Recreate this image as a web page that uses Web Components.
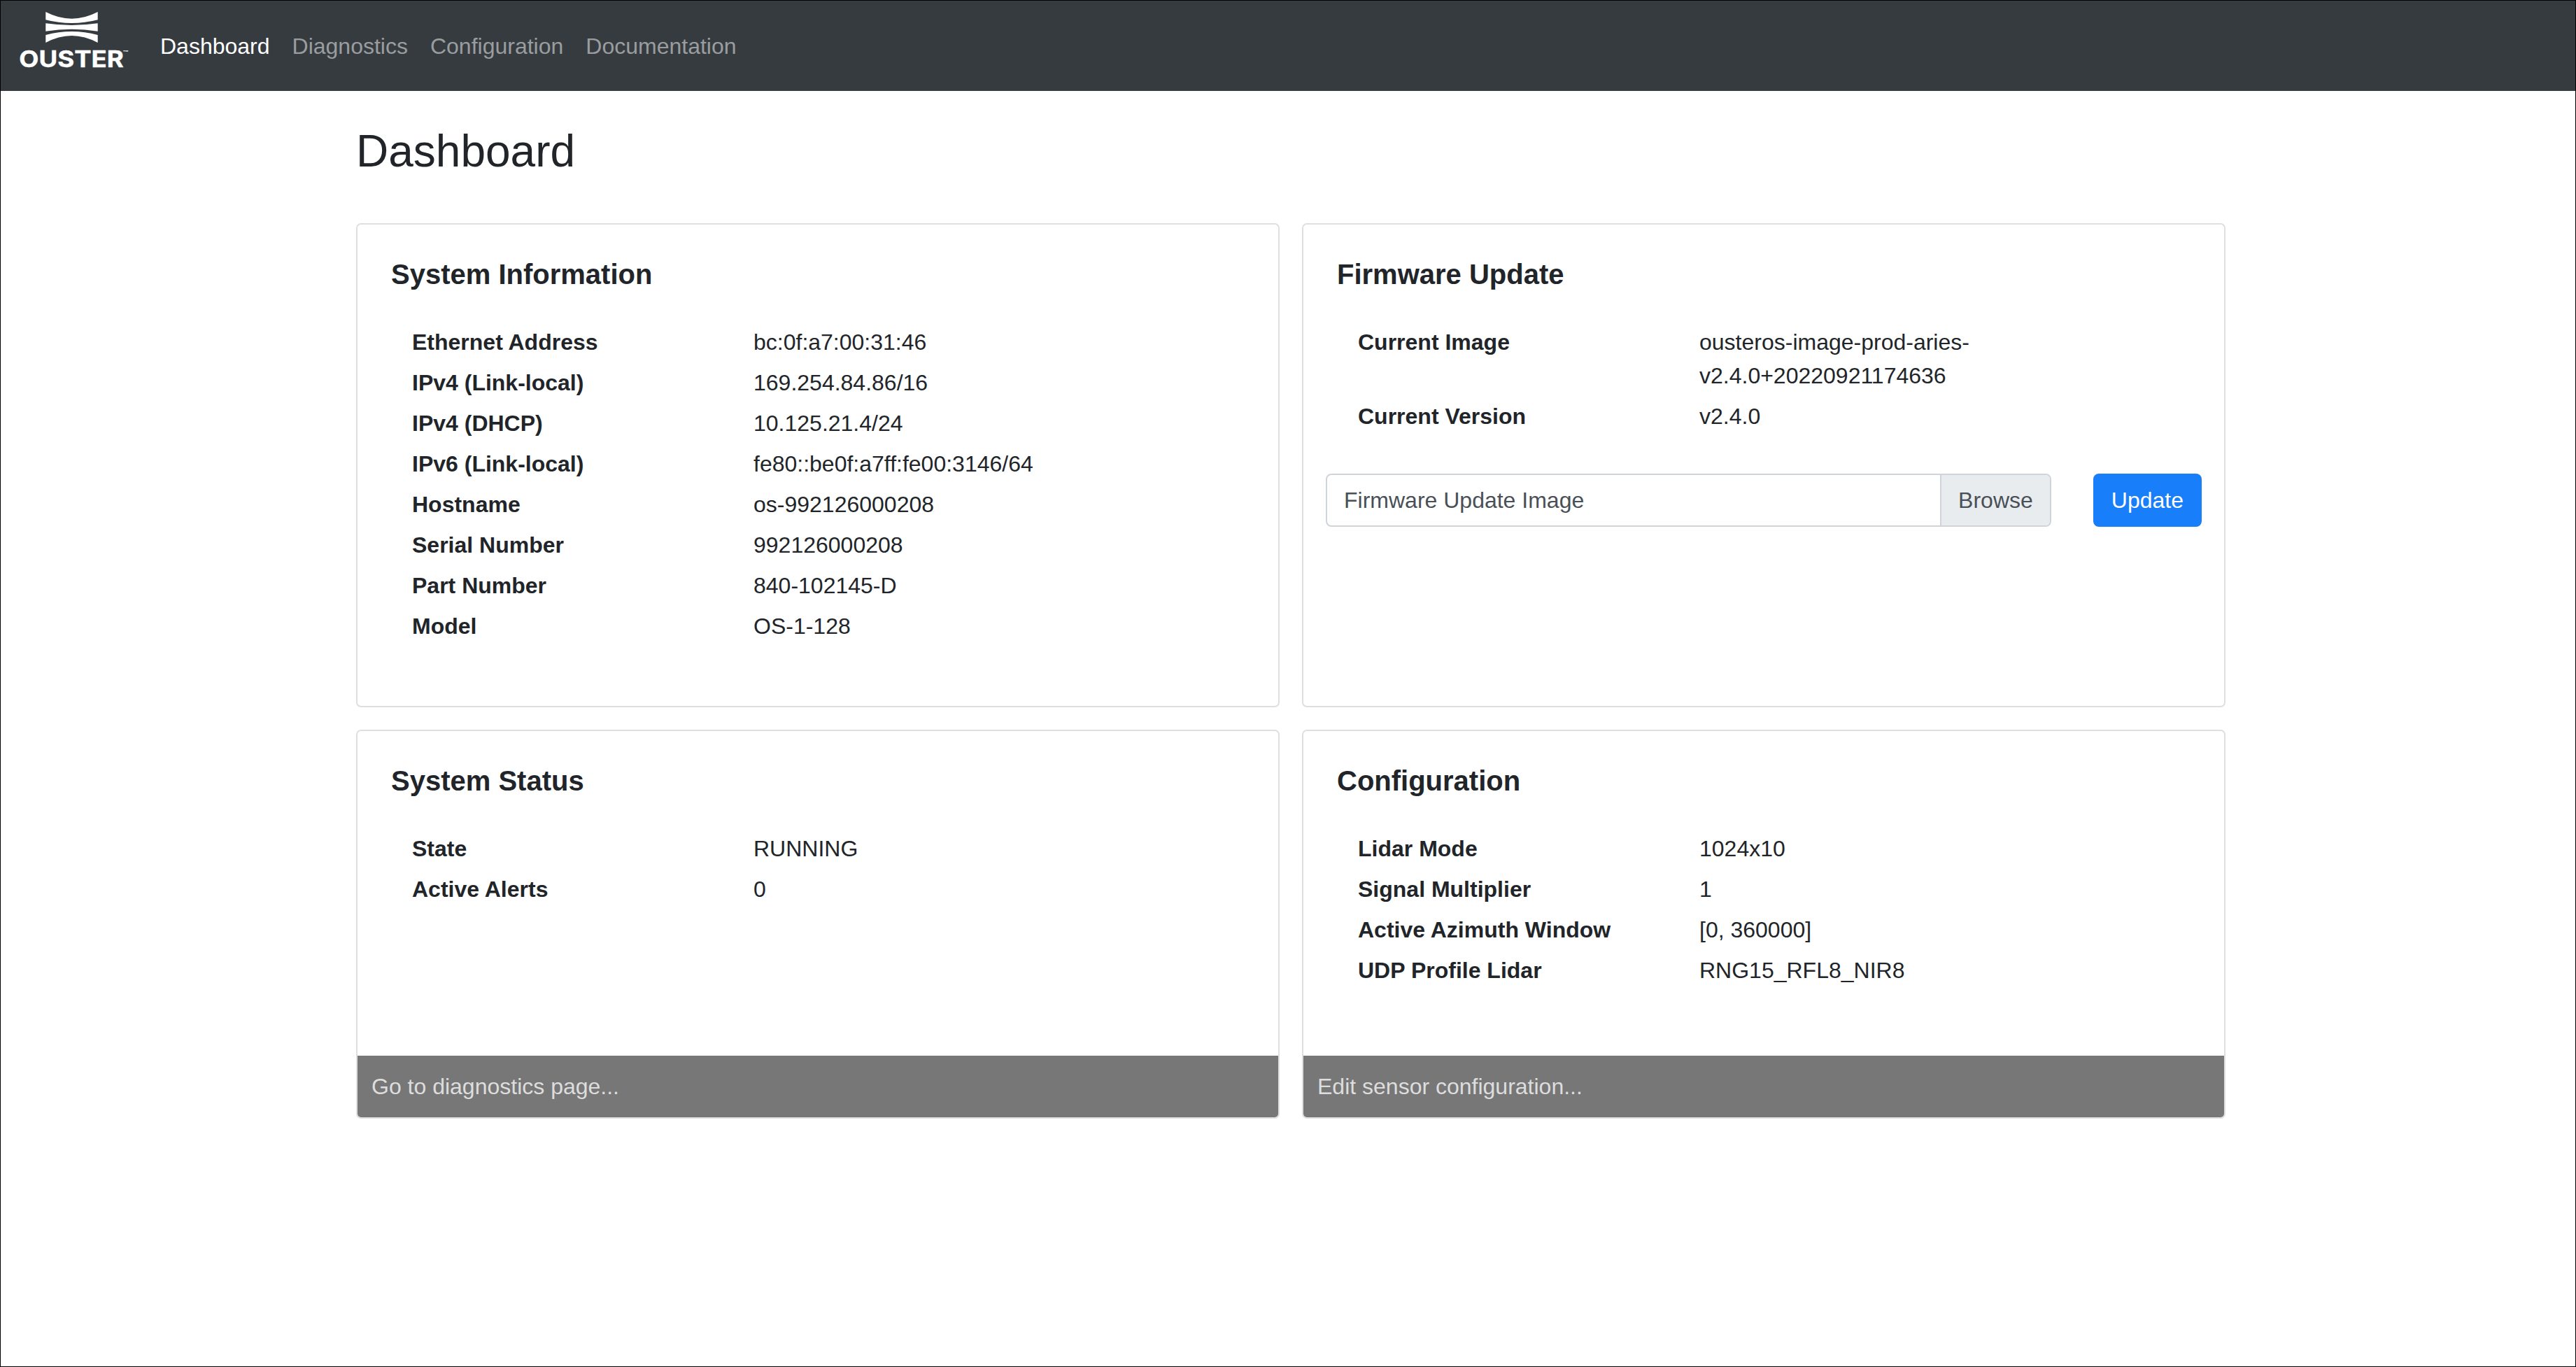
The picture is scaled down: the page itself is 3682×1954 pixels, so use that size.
<!DOCTYPE html>
<html lang="en">
<head>
<meta charset="utf-8">
<title>Ouster Dashboard</title>
<style>
  body {
    margin: 0;
    background: #fff;
    color: #212529;
    font: 32px/48px Arial, "Liberation Sans", sans-serif;
  }
</style>
</head>
<body>
<sensor-app>
  <nav-bar slot="header">
    <nav-link href="#dashboard" active>Dashboard</nav-link>
    <nav-link href="#diagnostics">Diagnostics</nav-link>
    <nav-link href="#configuration">Configuration</nav-link>
    <nav-link href="#documentation">Documentation</nav-link>
  </nav-bar>
  <span slot="title">Dashboard</span>

  <info-card heading="System Information">
    <info-row label="Ethernet Address">bc:0f:a7:00:31:46</info-row>
    <info-row label="IPv4 (Link-local)">169.254.84.86/16</info-row>
    <info-row label="IPv4 (DHCP)">10.125.21.4/24</info-row>
    <info-row label="IPv6 (Link-local)">fe80::be0f:a7ff:fe00:3146/64</info-row>
    <info-row label="Hostname">os-992126000208</info-row>
    <info-row label="Serial Number">992126000208</info-row>
    <info-row label="Part Number">840-102145-D</info-row>
    <info-row label="Model">OS-1-128</info-row>
  </info-card>

  <info-card heading="Firmware Update">
    <info-row label="Current Image">ousteros-image-prod-aries-v2.4.0+20220921174636</info-row>
    <info-row label="Current Version">v2.4.0</info-row>
    <firmware-form slot="form"></firmware-form>
  </info-card>

  <info-card heading="System Status">
    <info-row label="State">RUNNING</info-row>
    <info-row label="Active Alerts">0</info-row>
    <card-link slot="footer" href="#diagnostics">Go to diagnostics page...</card-link>
  </info-card>

  <info-card heading="Configuration">
    <info-row label="Lidar Mode">1024x10</info-row>
    <info-row label="Signal Multiplier">1</info-row>
    <info-row label="Active Azimuth Window">[0, 360000]</info-row>
    <info-row label="UDP Profile Lidar">RNG15_RFL8_NIR8</info-row>
    <card-link slot="footer" href="#configuration">Edit sensor configuration...</card-link>
  </info-card>
</sensor-app>

<script>
class BaseElement extends HTMLElement {
  constructor() {
    super()
    this.attachShadow({ mode: "open" })
  }

  connectedCallback() {
    this.shadowRoot.innerHTML = this.buildTemplate()
  }
}

class SensorApp extends BaseElement {
  buildTemplate() {
    return `<style>
    :host {
      display: flex;
      flex-direction: column;
      box-sizing: border-box;
      min-height: 100vh;
      border: 1px solid #000;
    }
    main {
      width: 2672px;
      padding: 48px 0 0 508px;
    }
    h1 {
      margin: 0 0 64px;
      font-size: 64px;
      font-weight: 400;
      line-height: 77px;
    }
    .cards {
      display: grid;
      grid-template-columns: 1fr 1fr;
      grid-template-rows: 692px 556px;
      gap: 32px;
    }
    </style>
    <slot name="header"></slot>
    <main>
      <h1><slot name="title"></slot></h1>
      <div class="cards"><slot></slot></div>
    </main>`
  }
}

class NavBar extends BaseElement {
  buildTemplate() {
    return `<style>
    :host {
      display: flex;
      align-items: center;
      height: 129px;
      background: #363b3f;
    }
    svg {
      width: 156px;
      height: 84px;
      margin: 0 45px 0 27px;
      padding-bottom: 15px;
      fill: #fff;
      font-family: Inter, sans-serif;
      font-weight: 700;
    }
    nav {
      display: flex;
      gap: 32px;
    }
    </style>
    <svg viewBox="28 16 156 84" role="img" aria-label="Ouster">
      <path d="M65.3 17Q102.5 36.4 139.7 17V28.2Q102.5 37.8 65.3 28.2Z"/>
      <path d="M65.3 33.3Q102.5 38.7 139.7 33.3V44.7Q102.5 38.7 65.3 44.7Z"/>
      <path d="M65.3 50Q102.5 40 139.7 50V61Q102.5 41 65.3 61Z"/>
      <text x="27.3" y="96.3" font-size="33" textLength="149.5" lengthAdjust="spacingAndGlyphs" stroke="#fff" stroke-width=".4">OUSTER</text>
      <text x="175.5" y="78" font-size="8" textLength="8" lengthAdjust="spacingAndGlyphs">™</text>
    </svg>
    <nav><slot></slot></nav>`
  }
}

class NavLink extends BaseElement {
  buildTemplate() {
    return `<style>
    :host { display: block; }
    a {
      color: #9a9d9f;
      text-decoration: none;
    }
    :host([active]) a { color: #fff; }
    </style><a href="${this.getAttribute("href")}"><slot></slot></a>`
  }
}

class InfoCard extends BaseElement {
  buildTemplate() {
    return `<style>
    :host {
      display: flex;
      flex-direction: column;
      box-sizing: border-box;
      min-width: 0;
      overflow: hidden;
      border: 2px solid #dfdfdf;
      border-radius: 7px;
    }
    .body {
      flex: 1;
      padding: 47px 32px 0;
    }
    h2 {
      margin: 0 16px 44px;
      font-size: 40px;
      font-weight: 700;
      line-height: 48px;
    }
    .rows {
      padding: 0 46px;
    }
    </style>
    <div class="body">
      <h2>${this.getAttribute("heading")}</h2>
      <div class="rows"><slot></slot></div>
      <slot name="form"></slot>
    </div>
    <slot name="footer"></slot>`
  }
}

class InfoRow extends BaseElement {
  buildTemplate() {
    return `<style>
    :host {
      display: grid;
      grid-template-columns: 488px 1fr;
      padding: 5px 0;
    }
    b { font-weight: 700; }
    </style><b>${this.getAttribute("label")}</b><span><slot></slot></span>`
  }
}

class FirmwareForm extends BaseElement {
  buildTemplate() {
    return `<style>
    :host {
      display: flex;
      gap: 60px;
      margin-top: 53px;
    }
    .file {
      display: flex;
      flex: 1;
      box-sizing: border-box;
      height: 76px;
      overflow: hidden;
      border: 2px solid #ced4da;
      border-radius: 8px;
      color: #495057;
    }
    .file span {
      flex: 1;
      padding: 12px 24px;
    }
    .file b {
      padding: 12px 24px;
      border-left: 2px solid #ced4da;
      background: #e9ecef;
      font-weight: 400;
    }
    button {
      height: 76px;
      padding: 12px 24px;
      border: 2px solid #197efa;
      border-radius: 8px;
      background: #197efa;
      color: #fff;
      font: inherit;
    }
    </style>
    <label class="file"><span>Firmware Update Image</span><b>Browse</b></label>
    <button type="button">Update</button>`
  }
}

class CardLink extends BaseElement {
  buildTemplate() {
    return `<style>
    :host {
      display: block;
      padding: 20px;
      background: #777;
    }
    a {
      color: #ddd;
      text-decoration: none;
    }
    </style><a href="${this.getAttribute("href")}"><slot></slot></a>`
  }
}

customElements.define("sensor-app", SensorApp)
customElements.define("nav-bar", NavBar)
customElements.define("nav-link", NavLink)
customElements.define("info-card", InfoCard)
customElements.define("info-row", InfoRow)
customElements.define("firmware-form", FirmwareForm)
customElements.define("card-link", CardLink)
</script>
</body>
</html>
